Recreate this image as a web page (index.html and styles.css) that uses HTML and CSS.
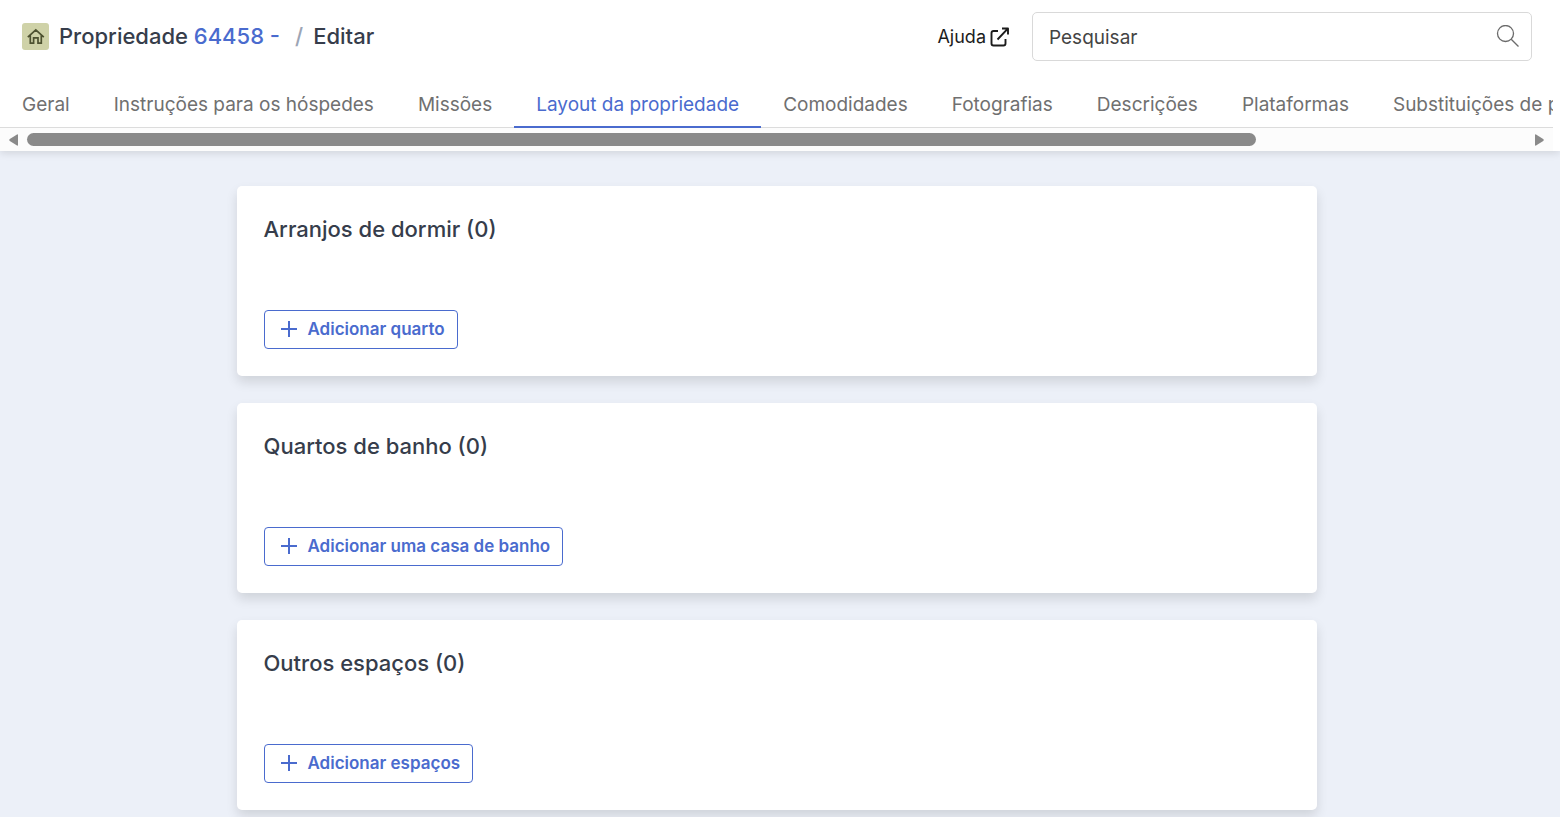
FILE: index.html
```html
<!DOCTYPE html>
<html lang="pt">
  <head>
    <meta charset="utf-8" />
    <title>Propriedade 64458 - Editar</title>
    <link rel="stylesheet" href="styles.css">
  </head>
  <body>
    <header class="header">
      <div class="topbar">
        <span class="home-badge">
          <svg viewBox="0 0 27 27" width="27" height="27" fill="none" stroke="#4d5130" stroke-width="1.7">
            <path d="M5.8 14.2 13.8 6.8 21.8 14.2M8.3 12.5V20.2H11.6V14.9H16V20.2H19.3V12.5" />
          </svg>
        </span>
        <h1 class="title">Propriedade <a href="#">64458 - </a></h1>
        <span class="slash">/</span>
        <span class="title">Editar</span>
        <a class="help" href="#">Ajuda
          <svg viewBox="0 0 20 20" width="20" height="20" fill="none" stroke="#1c1c1c" stroke-width="1.9" stroke-linejoin="round">
            <path d="M8 4H3.5Q1.5 4 1.5 6V16.500Q1.500 18.500 3.500 18.500H13.500Q15.500 18.500 15.500 16.500V12M12 1.500H18V7.500M17.800 1.700 7.500 12.500" />
          </svg>
        </a>
        <div class="search">
          <input type="text" placeholder="Pesquisar" aria-label="Pesquisar">
          <svg viewBox="0 0 24 24" width="24" height="24" fill="none" stroke="#6b6b6b" stroke-width="1.3">
            <circle cx="9.500" cy="8.500" r="8" />
            <path d="M15.200 14.200 22.500 21.500" />
          </svg>
        </div>
      </div>
      <nav class="tabs">
        <a href="#">Geral</a>
        <a href="#">Instruções para os hóspedes</a>
        <a href="#">Missões</a>
        <a href="#" class="active">Layout da propriedade</a>
        <a href="#">Comodidades</a>
        <a href="#">Fotografias</a>
        <a href="#">Descrições</a>
        <a href="#">Plataformas</a>
        <a href="#">Substituições de preços</a>
      </nav>
      <div class="scroller">
        <svg viewBox="0 0 9 12" width="9" height="12"><path d="M8 .5Q9 0 9 1V11Q9 12 8 11.500L.8 7Q-.3 6 .8 5Z" fill="#8a8a8a" /></svg>
        <div class="track"><div class="thumb"></div></div>
        <svg viewBox="0 0 9 12" width="9" height="12"><path d="M1 .5Q0 0 0 1V11Q0 12 1 11.500L8.200 7Q9.300 6 8.200 5Z" fill="#8a8a8a" /></svg>
      </div>
    </header>

    <main class="content">
      <section class="card">
        <h2>Arranjos de dormir (0)</h2>
        <button type="button" class="add-btn">
          <svg viewBox="0 0 16 16" width="16" height="16"><path d="M8 0V16M0 8H16" stroke="#4a6bce" stroke-width="2" /></svg>
          Adicionar quarto
        </button>
      </section>
      <section class="card">
        <h2>Quartos de banho (0)</h2>
        <button type="button" class="add-btn">
          <svg viewBox="0 0 16 16" width="16" height="16"><path d="M8 0V16M0 8H16" stroke="#4a6bce" stroke-width="2" /></svg>
          Adicionar uma casa de banho
        </button>
      </section>
      <section class="card">
        <h2>Outros espaços (0)</h2>
        <button type="button" class="add-btn">
          <svg viewBox="0 0 16 16" width="16" height="16"><path d="M8 0V16M0 8H16" stroke="#4a6bce" stroke-width="2" /></svg>
          Adicionar espaços
        </button>
      </section>
    </main>
  </body>
</html>
```

FILE: styles.css
```css
* {
  box-sizing:border-box;
}

body {
  margin:0;
  background-color:#ecf0f8;
  color:#363d4b;
  font-family:Inter, sans-serif;
  overflow-x:hidden;
}

a {
  color:#4a6bce;
  text-decoration:none;
}

.header {
  background-color:#fff;
  box-shadow:0 2px 8px rgba(0,0,0,0.12);
}

.topbar {
  display:flex;
  align-items:center;
  height:73px;
  padding:0 28px 0 22px;
}

.home-badge {
  width:27px;
  height:27px;
  margin-right:10px;
  border-radius:3px;
  background-color:#cfd2a8;
}

.title {
  margin:0;
  font-size:22px;
  font-weight:500;
  line-height:27px;
}

.slash {
  margin:0 10px 0 15px;
  color:#9ca5b5;
  font-size:22px;
  font-weight:500;
  line-height:27px;
}

.help {
  display:flex;
  align-items:center;
  gap:4px;
  margin-left:auto;
  margin-right:22px;
  color:#1c1c1c;
  font-size:18px;
}

.search {
  display:flex;
  align-items:center;
  width:500px;
  height:49px;
  padding:0 11px 0 16px;
  border:1px solid #d9d9d9;
  border-radius:5px;
}

.search input {
  flex:1;
  min-width:0;
  padding:2px 0 0;
  border:0;
  outline:none;
  background:none;
  font-family:inherit;
  font-size:19px;
}

.search input::placeholder {
  color:#444;
  opacity:1;
}

.tabs {
  display:flex;
  height:55px;
  margin-right:7px;
  overflow-x:auto;
  overflow-y:hidden;
  scrollbar-width:none;
  box-shadow:inset 0 -1px #dcdcdc;
}

.tabs a {
  flex:none;
  height:55px;
  padding:0 22px;
  color:#707070;
  font-size:19px;
  font-weight:400;
  line-height:63px;
  white-space:nowrap;
}

.tabs a.active {
  border-bottom:2px solid #4a6bce;
  color:#4a6bce;
}

.scroller {
  display:flex;
  align-items:center;
  gap:9px;
  height:23px;
  margin-right:7px;
  padding:0 9px;
  background-color:#fcfcfc;
}

.track {
  flex:1;
}

.thumb {
  width:82%;
  height:13px;
  border-radius:7px;
  background-color:#8a8a8a;
}

.content {
  display:grid;
  grid-template-columns:minmax(0, 1080px);
  justify-content:center;
  gap:27px;
  padding:35px 7px 8px 0;
}

.card {
  padding:27px;
  border-radius:5px;
  background-color:#fff;
  box-shadow:0 6px 12px rgba(0,0,0,0.12);
}

.card h2 {
  margin:0 0 64px;
  font-size:22px;
  font-weight:500;
  line-height:33px;
}

.add-btn {
  display:flex;
  align-items:center;
  gap:11px;
  height:39px;
  padding:0 12px 1px 16px;
  border:1px solid #4a6bce;
  border-radius:4px;
  background-color:#fff;
  color:#4a6bce;
  font-family:inherit;
  font-size:17px;
  font-weight:600;
}
```
